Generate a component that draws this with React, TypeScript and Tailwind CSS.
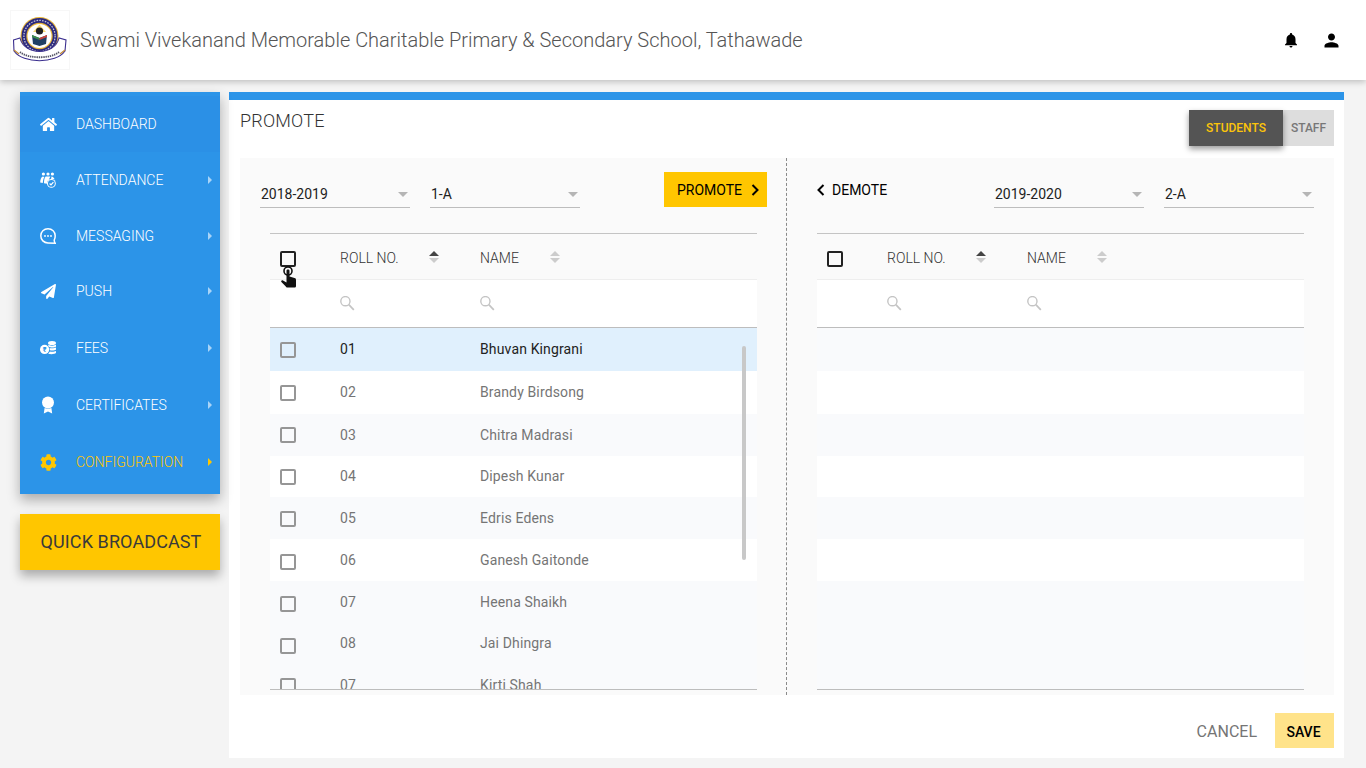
import React from "react";
import { FaHome, FaPaperPlane, FaCog } from "react-icons/fa";
import { MdNotifications, MdPerson } from "react-icons/md";

const Logo = () => (
  <svg width="56" height="56" viewBox="0 0 56 56">
    <circle cx="27.5" cy="24" r="19" fill="#e7b63a" />
    <circle cx="27.5" cy="24" r="18" fill="#2c2a7c" />
    <circle cx="27.5" cy="24" r="15.6" fill="none" stroke="#ffffff" strokeWidth="1.3" strokeDasharray="1.6 1.2" opacity="0.7" />
    <circle cx="27.5" cy="24" r="13.2" fill="#e7b63a" />
    <circle cx="27.5" cy="24" r="12" fill="#fff" />
    <path d="M21 20 L27.5 12.5 L34 20 Z" fill="#f2c93c" opacity="0.7" />
    <circle cx="27.5" cy="19" r="3.6" fill="#222" />
    <path d="M20 23 L27.5 26 L35 23 L34 32 L27.5 34 L21 32 Z" fill="#1f3f63" />
    <path d="M20 23 L27.5 26 L27.5 28 L20 25 Z" fill="#3d8f4a" />
    <path d="M35 23 L27.5 26 L27.5 28 L35 25 Z" fill="#c9443c" />
    <path d="M1.5 28 L8 26 C12 44 43 44 47 26 L54 28 L53 39 C44 52 11 52 2 39 Z" fill="#fff" stroke="#3b2f8f" strokeWidth="1.1" />
    <path d="M8 40 C16 47 39 47 47 40" fill="none" stroke="#555566" strokeWidth="1.8" strokeDasharray="1.4 0.8" />
    <path d="M2 38 L7 42 M53 38 L48 42" stroke="#c08a3a" strokeWidth="1.3" />
  </svg>
);

const AttendanceIcon = () => (
  <svg width="16" height="16" viewBox="0 0 16 16" fill="currentColor">
    <circle cx="3.4" cy="2" r="1.6" />
    <circle cx="8" cy="2" r="1.6" />
    <circle cx="12.4" cy="2" r="1.6" />
    <path d="M2.8 4.6 C1 5.2 .3 8 .2 10.4 L2.8 11 C2.9 9 3.4 6.2 4.4 5 Z" />
    <path d="M5.6 4.6 L10.4 4.6 C9.6 6 9.2 7 8.8 8 C7.6 8.6 6.9 10 6.9 11.8 L4 11.3 C4 8.6 4.4 5.8 5.6 4.6 Z" />
    <path d="M11.5 4.5 C13 4.8 14.2 5.8 14.6 7.4 C13.4 7 12.2 7 11 7.4 Z" />
    <circle cx="11.4" cy="11.4" r="4.4" />
    <circle cx="11.4" cy="11.4" r="3.4" fill="#2c94e8" />
    <path d="M9.6 11.5 L11 12.9 L13.4 10.2" fill="none" stroke="currentColor" strokeWidth="1.2" />
  </svg>
);

const MessageIcon = () => (
  <svg width="16" height="16" viewBox="0 0 16 16" fill="none" stroke="currentColor" strokeWidth="1.5">
    <path d="M8 .8 C3.9 .8 .8 3.9 .8 7.8 C.8 11.8 3.9 14.9 8 14.9 L15.2 15.2 C14.5 14.4 14.3 13.6 14.2 12.2 C14.9 11 15.2 9.4 15.2 7.8 C15.2 3.9 12.1 .8 8 .8 Z" />
    <circle cx="5" cy="8" r=".9" fill="currentColor" stroke="none" />
    <circle cx="8" cy="8" r=".9" fill="currentColor" stroke="none" />
    <circle cx="11" cy="8" r=".9" fill="currentColor" stroke="none" />
  </svg>
);

const FeesIcon = () => (
  <svg width="16" height="14" viewBox="0 0 16 14" fill="currentColor">
    <circle cx="4.6" cy="8.4" r="4.6" />
    <text x="4.6" y="11" textAnchor="middle" fontSize="7" fontWeight="700" fill="#2c94e8" fontFamily="Roboto, sans-serif">₹</text>
    <ellipse cx="12" cy="2" rx="4" ry="2" />
    <path d="M8 3.6 C9 5 15 5 16 3.6 L16 5.4 C15 6.8 10 6.8 8.6 5.4 Z" />
    <path d="M9.6 7 C11 7.6 14.6 7.4 16 6.6 L16 8.6 C15 9.6 11.4 9.8 10 9.2 Z" />
    <path d="M10 10.4 C11.4 11 14.6 10.8 16 10 L16 11.8 C15 13.4 10.8 13.6 8.2 12.8 Z" />
  </svg>
);

const CertIcon = () => (
  <svg width="16" height="18" viewBox="0 0 16 18" fill="currentColor">
    <circle cx="8" cy="6.4" r="6" />
    <path d="M4.6 12 L3.8 17.6 L8 15.6 L12.2 17.6 L11.4 12 C9.6 13 6.4 13 4.6 12 Z" />
  </svg>
);

const SearchGlyph = () => (
  <svg width="16" height="16" viewBox="0 0 16 16" fill="none" stroke="#c4c4c4" strokeWidth="1.4">
    <circle cx="5.4" cy="5.2" r="4.6" />
    <path d="M8.8 8.6 L13.8 13.8" strokeWidth="1.7" />
  </svg>
);

const navItems = [
  { label: "DASHBOARD", icon: <FaHome size={17} />, h: "h-[56px]", arrow: false, active: false, band: "bg-[#2b90e6]" },
  { label: "ATTENDANCE", icon: <AttendanceIcon />, h: "h-[56px]", arrow: true, active: false, band: "" },
  { label: "MESSAGING", icon: <MessageIcon />, h: "h-[55px]", arrow: true, active: false, band: "" },
  { label: "PUSH", icon: <FaPaperPlane size={15} />, h: "h-[57px]", arrow: true, active: false, band: "" },
  { label: "FEES", icon: <FeesIcon />, h: "h-[57px]", arrow: true, active: false, band: "" },
  { label: "CERTIFICATES", icon: <CertIcon />, h: "h-[57px]", arrow: true, active: false, band: "" },
  { label: "CONFIGURATION", icon: <FaCog size={17} />, h: "h-[60px]", arrow: true, active: true, band: "" },
];

const students = [
  { roll: "01", name: "Bhuvan Kingrani", h: "h-[43px]", bg: "bg-[#e0f0fd]", text: "text-[#222222]", cb: "", lift: "-mt-[2px]" },
  { roll: "02", name: "Brandy Birdsong", h: "h-[43px]", bg: "bg-white", text: "text-[#757575]", cb: "", lift: "-mt-[2px]" },
  { roll: "03", name: "Chitra Madrasi", h: "h-[42px]", bg: "bg-[#f9fafc]", text: "text-[#757575]", cb: "", lift: "" },
  { roll: "04", name: "Dipesh Kunar", h: "h-[41px]", bg: "bg-white", text: "text-[#757575]", cb: "", lift: "-mt-[2px]" },
  { roll: "05", name: "Edris Edens", h: "h-[42px]", bg: "bg-[#f9fafc]", text: "text-[#757575]", cb: "mt-[2px]", lift: "" },
  { roll: "06", name: "Ganesh Gaitonde", h: "h-[42px]", bg: "bg-white", text: "text-[#757575]", cb: "mt-[4px]", lift: "" },
  { roll: "07", name: "Heena Shaikh", h: "h-[42px]", bg: "bg-[#f9fafc]", text: "text-[#757575]", cb: "mt-[4px]", lift: "" },
  { roll: "08", name: "Jai Dhingra", h: "h-[41px]", bg: "bg-[#f9fafc]", text: "text-[#757575]", cb: "mt-[4px]", lift: "-mt-[2px]" },
  { roll: "07", name: "Kirti Shah", h: "h-[42px]", bg: "bg-[#f9fafc]", text: "text-[#757575]", cb: "mt-[2px]", lift: "" },
];

const emptyRows = students.map((s) => ({
  h: s.h,
  bg: s.bg === "bg-[#e0f0fd]" ? "bg-[#f9fafc]" : s.bg,
}));

const Select = ({ value }: { value: string }) => (
  <div className="flex h-[30px] w-[150px] items-center justify-between border-b border-[#bdbdbd] pl-px pt-[3px] text-sm text-[#222222]">
    <span>{value}</span>
    <span className="mr-[2px] h-0 w-0 border-x-[5px] border-t-[5px] border-x-transparent border-t-[#b5b5b5]" />
  </div>
);

const Sort = ({ active }: { active?: boolean }) => (
  <span className="-mt-[4px] flex flex-col items-center gap-[2px]">
    <span className={`h-0 w-0 border-x-[5px] border-b-[5px] border-x-transparent ${active ? "border-b-[#444444]" : "border-b-[#cccccc]"}`} />
    <span className="h-0 w-0 border-x-[5px] border-t-[5px] border-x-transparent border-t-[#cccccc]" />
  </span>
);

const TableHead = () => (
  <>
    <div className="flex h-[47px] items-center border-y border-b-[#eeeeee] border-t-[#c4c4c4] pt-[4px] text-sm font-light text-[#333333]">
      <span className="ml-[10px] box-border h-4 w-4 rounded-[2px] border-2 border-[#222222]" />
      <span className="ml-11 -mt-[2px] w-[89px]">ROLL NO.</span>
      <Sort active />
      <span className="ml-[41px] -mt-[2px] w-[70px]">NAME</span>
      <Sort />
    </div>
    <div className="flex h-[48px] items-center border-b border-[#bdbdbd] bg-white">
      <span className="ml-[70px] w-[140px]"><SearchGlyph /></span>
      <SearchGlyph />
    </div>
  </>
);

export default function App() {
  return (
    <div className="flex h-screen w-full flex-col overflow-hidden bg-[#f4f4f4] font-['Roboto',sans-serif]">
      <header className="relative z-10 flex h-20 shrink-0 items-center bg-white shadow-[0_2px_6px_rgba(0,0,0,0.22)]">
        <div className="ml-[10px] flex h-[60px] w-[60px] items-center justify-center border border-[#f7f7f7]">
          <Logo />
        </div>
        <h1 className="ml-[10px] text-xl font-light text-[#555555]">
          Swami Vivekanand Memorable Charitable Primary &amp; Secondary School, Tathawade
        </h1>
        <div className="ml-auto mr-5 flex gap-[10px] text-black">
          <span className="flex h-[30px] w-[30px] items-center justify-center rounded-full"><MdNotifications size={18} /></span>
          <span className="flex h-[30px] w-[30px] items-center justify-center rounded-full"><MdPerson size={21} /></span>
        </div>
      </header>

      <div className="flex min-h-0 flex-1 pl-5 pt-3">
        <aside className="w-[200px] shrink-0">
          <nav className="relative flex h-[402px] flex-col bg-[#2c94e8] pt-1 shadow-[0_6px_12px_rgba(0,0,0,0.3)]">
            {navItems.map((item) => (
              <div key={item.label} className={`relative ${item.h}`}>
                <div className={`flex h-14 items-center text-sm font-light ${item.band} ${item.active ? "text-[#ffc600]" : "text-white"}`}>
                  <span className="flex w-[56px] justify-center">
                    <span className={item.active ? "text-[#ffc600]" : "text-white"}>{item.icon}</span>
                  </span>
                  <span>{item.label}</span>
                  {item.arrow && (
                    <span className={`absolute right-2 top-[24px] h-0 w-0 border-y-4 border-l-4 border-y-transparent ${item.active ? "border-l-[#ffc600]" : "border-l-[#a9d4f7]"}`} />
                  )}
                </div>
              </div>
            ))}
          </nav>
          <button className="mt-5 flex h-14 w-full items-center justify-center bg-[#ffc600] pl-[2px] text-lg tracking-[0.1px] text-[#3a3a3a] shadow-[0_6px_10px_rgba(0,0,0,0.3)]">
            QUICK BROADCAST
          </button>
        </aside>

        <main className="ml-[9px] mb-[10px] flex w-[1115px] flex-col border-t-8 border-[#2c94e8] bg-white pl-[11px] pr-[10px]">
          <div className="flex h-[58px] items-start justify-between">
            <h2 className="mt-[10px] text-lg font-light leading-[21px] tracking-[0.2px] text-[#333333]">PROMOTE</h2>
            <div className="mt-[10px] flex h-9 text-xs font-medium">
              <span className="relative flex w-[94px] items-center justify-center bg-[#545454] text-[#fcc40a] shadow-[0_3px_6px_rgba(0,0,0,0.4)]">STUDENTS</span>
              <span className="flex w-[51px] items-center justify-center bg-[#dddddd] text-[#777777]">STAFF</span>
            </div>
          </div>

          <div className="flex h-[537px] bg-[#fafafa]">
            <section className="flex w-[546px] shrink-0 flex-col">
              <div className="flex h-[75px] items-start pl-5 pt-[20px]">
                <Select value="2018-2019" />
                <div className="ml-5"><Select value="1-A" /></div>
                <button className="ml-[84px] -mt-[6px] flex h-[35px] w-[103px] shrink-0 items-center gap-[9px] bg-[#ffc600] pl-[13px] text-sm text-black">
                  PROMOTE
                  <svg width="8" height="12" viewBox="0 0 8 12" fill="none" stroke="currentColor" strokeWidth="2"><path d="M1.5 1 L6.5 6 L1.5 11" /></svg>
                </button>
              </div>
              <div className="ml-[30px] w-[487px]">
                <div className="relative">
                  <TableHead />
                  <svg className="absolute left-[10px] top-[33px]" width="18" height="24" viewBox="0 0 18 24">
                    <circle cx="8" cy="5" r="4" fill="none" stroke="#111111" strokeWidth="1.6" />
                    <path d="M6.5 4.5 C6.5 3 9.5 3 9.5 4.5 V10.5 L14.5 12 C15.8 12.4 16 13.2 16 14 V20 C16 21 15.4 21.6 14.4 21.6 H7.4 C6.6 21.6 6.2 21.2 5.8 20.6 L1.4 16 C.6 15 2 13.6 3 14.4 L6.5 16.5 Z" fill="#111111" />
                  </svg>
                </div>
                <div className="relative h-[362px] overflow-hidden border-b border-[#bdbdbd]">
                  {students.map((s, i) => (
                    <div key={i} className={`flex shrink-0 items-center text-sm tracking-[0.14px] ${s.h} ${s.bg} ${s.text}`}>
                      <span className={`ml-[10px] box-border h-4 w-4 rounded-[2px] border-2 border-[#969696] ${s.cb}`} />
                      <span className={`ml-11 w-[140px] ${s.lift}`}>{s.roll}</span>
                      <span className={s.lift}>{s.name}</span>
                    </div>
                  ))}
                  <span className="absolute left-[472px] top-[18px] h-[214px] w-1 rounded-full bg-[#c8c8c8]" />
                </div>
              </div>
            </section>

            <div className="border-l border-dashed border-[#8a8a8a]" />

            <section className="flex min-w-0 flex-1 flex-col">
              <div className="flex h-[75px] items-start pt-[20px]">
                <button className="ml-[30px] -mt-[6px] flex h-[35px] items-center gap-[7px] text-sm text-black">
                  <svg width="8" height="12" viewBox="0 0 8 12" fill="none" stroke="currentColor" strokeWidth="2"><path d="M6.5 1 L1.5 6 L6.5 11" /></svg>
                  DEMOTE
                </button>
                <div className="ml-auto flex gap-5 pr-5">
                  <Select value="2019-2020" />
                  <Select value="2-A" />
                </div>
              </div>
              <div className="ml-[30px] w-[487px]">
                <TableHead />
                <div className="h-[362px] overflow-hidden border-b border-[#bdbdbd]">
                  {emptyRows.map((r, i) => (
                    <div key={i} className={`${r.h} ${r.bg}`} />
                  ))}
                </div>
              </div>
            </section>
          </div>

          <div className="flex flex-1 items-start justify-end pt-[18px]">
            <button className="mr-[18px] h-[35px] pt-[2px] text-base text-[#757575]">CANCEL</button>
            <button className="h-[35px] w-[59px] bg-[#ffe38a] pr-[2px] pt-[2px] text-sm font-medium text-black">SAVE</button>
          </div>
        </main>
      </div>
    </div>
  );
}
